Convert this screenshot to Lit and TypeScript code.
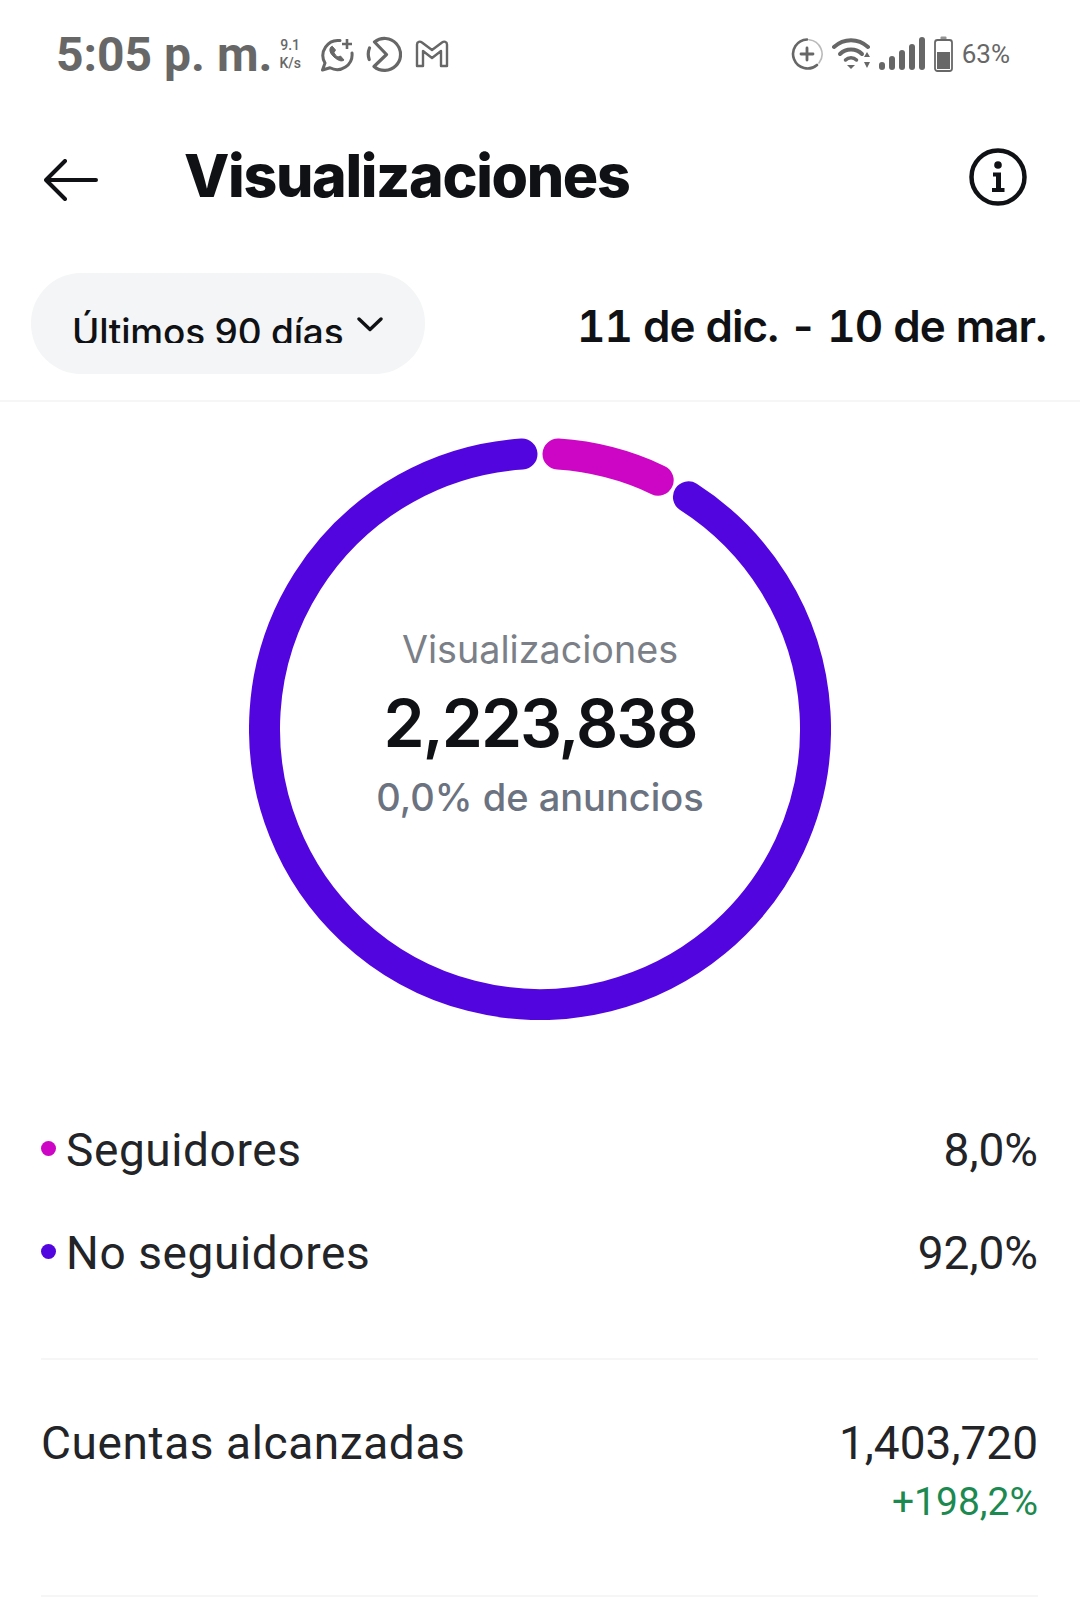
import { LitElement, html, css, svg } from 'lit';
import { customElement } from 'lit/decorators.js';

const CX = 291;
const CY = 291;
const R = 275.5;

// clockwise arc along the ring, 0deg is twelve o'clock
function arc(from: number, to: number) {
  const pt = (deg: number) => {
    const a = (deg * Math.PI) / 180;
    return `${(CX + R * Math.sin(a)).toFixed(2)} ${(CY - R * Math.cos(a)).toFixed(2)}`;
  };
  const large = to - from > 180 ? 1 : 0;
  return `M${pt(from)}A${R} ${R} 0 ${large} 1 ${pt(to)}`;
}

const legend = [
  { name: 'Seguidores', value: '8,0%', color: '#cc06c4' },
  { name: 'No seguidores', value: '92,0%', color: '#5205df' },
];

@customElement('app-root')
export class AppRoot extends LitElement {
  static styles = css`
    :host {
      display: block;
      width: 1080px;
      height: 1613px;
      overflow: hidden;
      background: #fff;
      color: #101114;
      font-family: Inter, 'Liberation Sans', sans-serif;
    }

    .status {
      display: flex;
      align-items: center;
      height: 108px;
      padding: 0 70px 0 56px;
      box-sizing: border-box;
      color: #676767;
      font-family: Roboto, sans-serif;
    }
    .status svg { display: block; flex: none; }
    .time { font-size: 48px; font-weight: 700; line-height: 1; white-space: nowrap; margin-top: 2px; }
    .speed {
      display: flex;
      flex-direction: column;
      margin: 0 18px 0 7px;
      font-size: 14px;
      font-weight: 500;
      line-height: 18px;
      text-align: center;
    }
    .left-icons { display: flex; align-items: center; gap: 11px; }
    .mail { margin-left: 2px; }
    .right-icons { display: flex; align-items: center; margin-left: auto; }
    .wifi { margin-left: 9px; }
    .bars, .batt { margin-left: 8px; }
    .battery-text { font-size: 26px; margin-left: 9px; }

    .header {
      display: flex;
      align-items: center;
      height: 138px;
      padding: 0 53px 0 44px;
    }
    .header svg { display: block; flex: none; }
    .back { margin-top: 6px; }
    h1 {
      margin: 0 0 4px 86px;
      font-size: 59px;
      font-weight: 800;
      letter-spacing: -1.35px;
      line-height: 1;
    }
    .info { margin-left: auto; }

    .filters {
      display: flex;
      align-items: center;
      justify-content: space-between;
      height: 101px;
      margin-top: 27px;
      padding: 0 34px 0 31px;
    }
    .pill {
      display: flex;
      box-sizing: border-box;
      width: 394px;
      height: 101px;
      padding: 0 0 0 41px;
      border-radius: 50px;
      background: #f4f5f6;
      font-size: 37px;
      font-weight: 500;
      letter-spacing: -0.2px;
      white-space: nowrap;
    }
    /* the label is cut off at its baseline in the app */
    .pill-text {
      height: 70px;
      overflow: hidden;
      line-height: 117px;
    }
    .pill svg { margin: 44px 0 0 14px; display: block; }
    .range {
      font-size: 44px;
      font-weight: 600;
      font-variant-numeric: tabular-nums;
      letter-spacing: -0.95px;
      white-space: nowrap;
      margin-top: 4px;
    }

    .rule { height: 2px; background: #f6f6f6; }
    .filters + .rule { margin-top: 26px; }

    .chart {
      display: grid;
      justify-content: center;
      margin-top: 36px;
    }
    .chart > * { grid-area: 1 / 1; }
    .chart svg { display: block; }
    .center {
      display: flex;
      flex-direction: column;
      align-items: center;
      padding-top: 189px;
    }
    .center-label { font-size: 37.700px; line-height: 44px; color: #7b7f87; }
    .center-value {
      font-size: 66px;
      font-weight: 600;
      letter-spacing: -2px;
      line-height: 80px;
      margin-top: 12px;
    }
    .center-sub { font-size: 38px; font-weight: 500; line-height: 44px; margin-top: 12px; color: #6b7280; }

    .rows {
      font-family: Roboto, sans-serif;
      font-size: 46px;
      color: #232428;
      padding: 0 42px 0 41px;
    }
    .legend { margin-top: 103px; display: flex; flex-direction: column; gap: 49px; }
    .row { display: flex; justify-content: space-between; line-height: 54px; }
    .row-name { display: flex; align-items: center; letter-spacing: 0.6px; }
    .dot { width: 15px; height: 15px; border-radius: 50%; margin: -4px 10px 0 0; }
    .rows .rule { margin-top: 78px; }
    .reach { display: flex; justify-content: space-between; margin-top: 56px; line-height: 54px; }
    .reach-name { letter-spacing: 0.6px; }
    .reach-right { display: flex; flex-direction: column; align-items: flex-end; }
    .delta { font-size: 39px; line-height: 44px; color: #1c8a50; margin-top: 10px; }
    .rows .rule.last { margin-top: 71px; }
  `;

  private renderLeftIcons() {
    return html`<div class="left-icons">
      <svg width="36" height="36" viewBox="0 0 36 36" fill="none" stroke="currentColor" stroke-width="3" stroke-linecap="round" stroke-linejoin="round">
        <path d="M21 4.600A15 15 0 0 0 6 27L3.500 34l7.500-2.200A15 15 0 0 0 33 17" />
        <path d="M11.500 11.500c-1.500 2.500-.5 6 3.500 9.500s7.500 5 10 3l-3.500-4-2.500 1c-2-1-3-2.500-4-4.500l1.500-2.500-3-3.500z" fill="currentColor" stroke-width="1" />
        <path d="M28 3v10M23 8h10" stroke-width="2.600" stroke-linecap="butt" />
      </svg>
      <svg width="36" height="38" viewBox="0 0 36 38" fill="none" stroke="currentColor" stroke-width="3.200" stroke-linecap="round" stroke-linejoin="round">
        <path d="M8.500 7A16 16 0 1 1 8 31.500L20.500 19.500 8.500 7z" />
        <path d="M3.200 24.500A16 16 0 0 1 3.500 13" />
      </svg>
      <svg class="mail" width="34" height="28" viewBox="0 0 34 28" fill="none" stroke="currentColor" stroke-width="2.400" stroke-linejoin="round">
        <path d="M2 4.500C2 1.500 5 1 7 2.500L17 10l10-7.500c2-1.500 5-1 5 2V26h-6V11l-9 7-9-7v15H2z" />
      </svg>
    </div>`;
  }

  private renderRightIcons() {
    return html`<div class="right-icons">
      <svg width="32" height="32" viewBox="0 0 32 32" fill="none" stroke="currentColor" stroke-linecap="round">
        <path d="M26 27A14.500 14.500 0 1 1 16 1.500" stroke-width="2.600" />
        <path d="M18 1.700A14.500 14.500 0 0 1 28 25" stroke-width="1.600" opacity=".45" />
        <path d="M16 10v12M10 16h12" stroke-width="2.800" />
      </svg>
      <svg class="wifi" width="39" height="32" viewBox="0 0 39 32" fill="none" stroke="currentColor" stroke-linecap="round">
        <path d="M2 9c10-9 24-9 34 0" stroke-width="4" />
        <path d="M8 16c6-6 16-6 22 0" stroke-width="4" />
        <path d="M13.500 22c3-3 8-3 11 0" stroke-width="3.500" />
        <path d="M15 27h8l-4 4z" fill="currentColor" stroke="none" />
        <path d="M32 19h6l-3-5zM32 24h6l-3 6z" fill="currentColor" stroke="none" />
      </svg>
      <svg class="bars" width="47" height="34" viewBox="0 0 47 34" fill="currentColor">
        <rect x="0" y="25" width="6" height="8" rx="3" />
        <rect x="10" y="19" width="6" height="14" rx="3" />
        <rect x="20" y="13" width="6" height="20" rx="3" />
        <rect x="30" y="7" width="6" height="26" rx="3" />
        <rect x="40" y="0" width="6" height="33" rx="3" />
      </svg>
      <svg class="batt" width="19" height="36" viewBox="0 0 19 36" fill="none">
        <rect x="1" y="4" width="17" height="31" rx="2.500" stroke="currentColor" stroke-width="1.800" />
        <rect x="6.500" y="0.500" width="6" height="3.500" rx="1" fill="currentColor" opacity=".7" />
        <rect x="3" y="16" width="13" height="17" fill="currentColor" />
      </svg>
      <span class="battery-text">63%</span>
    </div>`;
  }

  render() {
    return html`
      <div class="status">
        <span class="time">5:05 p. m.</span>
        <span class="speed"><span>9.1</span><span>K/s</span></span>
        ${this.renderLeftIcons()} ${this.renderRightIcons()}
      </div>

      <div class="header">
        <svg class="back" width="54" height="42" viewBox="0 0 54 42" fill="none" stroke="#101114" stroke-width="4" stroke-linecap="round" stroke-linejoin="round">
          <path d="M52 21H3M21 2L2 21l19 19" />
        </svg>
        <h1>Visualizaciones</h1>
        <svg class="info" width="58" height="58" viewBox="0 0 58 58" fill="none">
          <circle cx="29" cy="29" r="26.500" stroke="#101114" stroke-width="4.500" />
          <circle cx="29" cy="17" r="3.800" fill="#101114" />
          <path d="M24 24.500h8v15.500h3.500v4h-12.500v-4H27V28.500h-3z" fill="#101114" />
        </svg>
      </div>

      <div class="filters">
        <div class="pill">
          <span class="pill-text">Últimos 90 días</span>
          <svg width="26" height="15" viewBox="0 0 26 15" fill="none" stroke="#101114" stroke-width="3.400" stroke-linecap="round" stroke-linejoin="round">
            <path d="M2 2l11 10.500L24 2" />
          </svg>
        </div>
        <span class="range">11 de dic. - 10 de mar.</span>
      </div>
      <div class="rule"></div>

      <div class="chart">
        <svg width="582" height="582" viewBox="0 0 582 582" fill="none" stroke-width="31" stroke-linecap="round">
          ${svg`<path d=${arc(32.6, 356.25)} stroke="#5205df" />`}
          ${svg`<path d=${arc(3.75, 25.4)} stroke="#cc06c4" />`}
        </svg>
        <div class="center">
          <span class="center-label">Visualizaciones</span>
          <span class="center-value">2,223,838</span>
          <span class="center-sub">0,0% de anuncios</span>
        </div>
      </div>

      <div class="rows">
        <div class="legend">
          ${legend.map(
            (l) => html`<div class="row">
              <span class="row-name"><i class="dot" style="background:${l.color}"></i>${l.name}</span>
              <span>${l.value}</span>
            </div>`
          )}
        </div>
        <div class="rule"></div>
        <div class="reach">
          <span class="reach-name">Cuentas alcanzadas</span>
          <div class="reach-right">
            <span>1,403,720</span>
            <span class="delta">+198,2%</span>
          </div>
        </div>
        <div class="rule last"></div>
      </div>
    `;
  }
}
